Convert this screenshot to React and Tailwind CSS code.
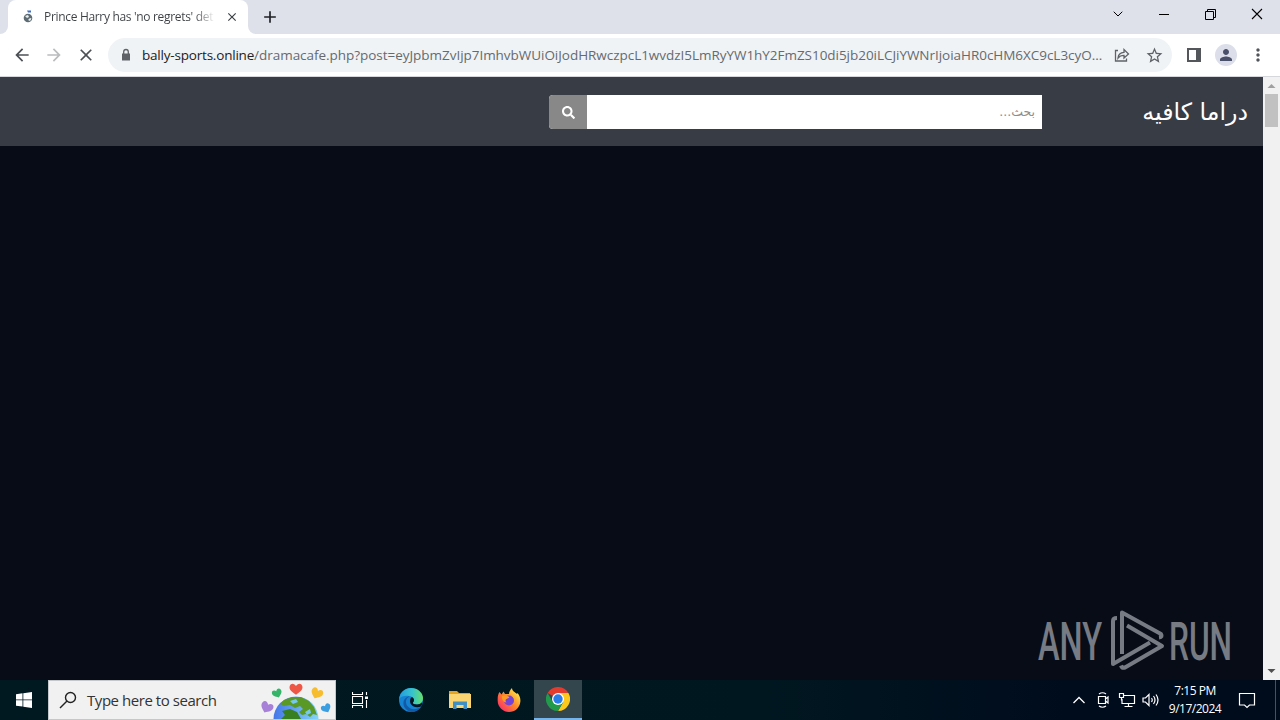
import { ChevronDown } from 'lucide-react';
import { FaSearch } from 'react-icons/fa';
import {
  MdArrowBack,
  MdArrowForward,
  MdClose,
  MdAdd,
  MdMoreVert,
  MdPerson,
  MdStarBorder,
} from 'react-icons/md';

/* Tab strip and window buttons */
function TabStrip() {
  return (
    <div className="flex h-[34px] shrink-0 bg-[#dee1e9] text-[#3c4043]">
      <div className="flex w-2 items-end bg-white">
        <span className="h-full w-2 rounded-br-lg bg-[#dee1e9]" />
      </div>
      <div className="flex w-[240px] items-center rounded-t-lg bg-white pl-3">
        <svg width="16" height="16" viewBox="0 0 16 16">
          <circle cx="8" cy="9" r="4.3" fill="#5f6b72" />
          <path d="M5 7l3-1 1 2-2 1zM8 11l2-2 1.500.5-1.500 2.500z" fill="#e8f0f2" />
          <path d="M7 1.500h4v2H8z" fill="#3d6ec4" />
        </svg>
        <div className="ml-2 w-[171px] bg-gradient-to-r from-[#3c4043] from-88% to-transparent bg-clip-text font-['Open_Sans',sans-serif] text-[12px] leading-5 tracking-[-0.32px] whitespace-nowrap text-transparent">
          Prince Harry has 'no regrets' det
        </div>
        <MdClose size={14} className="ml-2.5 text-[#3c4043]" />
      </div>
      <div className="flex w-2 bg-white">
        <span className="h-full w-2 rounded-bl-lg bg-[#dee1e9]" />
      </div>
      <MdAdd size={20} className="mt-[7px] ml-[4px] text-[#202124]" />
      <div className="ml-auto flex h-7 items-center text-black">
        <ChevronDown size={16} strokeWidth={1.5} className="mr-[33px]" />
        <span className="mr-9 h-px w-[10px] bg-black" />
        <svg width="11" height="11" viewBox="0 0 11 11" fill="none" stroke="currentColor" className="mr-[35px]">
          <path d="M.5 2.500h8v8h-8zM2.500 2.500v-2h8v8h-2" />
        </svg>
        <svg width="12" height="12" viewBox="0 0 12 12" fill="none" stroke="currentColor" strokeWidth="1.100" className="mr-[17px]">
          <path d="M1 1l10 10M11 1L1 11" />
        </svg>
      </div>
    </div>
  );
}

/* Navigation buttons and address bar */
function Toolbar() {
  return (
    <div className="flex h-[43px] shrink-0 items-center border-b border-[#d5d7dc] bg-white text-[#5f6368]">
      <MdArrowBack size={20} className="ml-3 text-[#4c5055]" />
      <MdArrowForward size={20} className="ml-3 text-[#babcbe]" />
      <MdClose size={20} className="ml-3 text-[#4c5055]" />
      <div className="ml-3 flex h-[34px] w-[1064px] items-center rounded-full bg-[#f0f3f5] pl-[11px]">
        <svg width="14" height="14" viewBox="0 0 14 14">
          <path d="M3 5.500h8v7H3z" fill="currentColor" />
          <path d="M4.700 6V3.800a2.300 2.300 0 0 1 4.600 0V6" fill="none" stroke="currentColor" strokeWidth="1.300" />
        </svg>
        <div className="ml-[9px] flex w-[961px] font-['Open_Sans',sans-serif] text-[13.500px] leading-5 whitespace-nowrap">
          <span className="tracking-[-0.2px] text-[#202124]">bally-sports.online</span>
          <span className="tracking-[-0.035px] text-[#656a6f]">
            /dramacafe.php?post=eyJpbmZvIjp7ImhvbWUiOiJodHRwczpcL1wvdzI5LmRyYW1hY2FmZS10di5jb20iLCJiYWNrIjoiaHR0cHM6XC9cL3cyO...
          </span>
        </div>
        <svg width="16" height="16" viewBox="0 0 16 16" fill="none" stroke="currentColor" strokeWidth="1.300" className="ml-[11px]">
          <path d="M4 3.500H1.500v10.500h11v-2.500M4 11c.3-3.600 2.400-5.400 6-5.600V2.500L14.500 7 10 11V8.300C7.300 8.300 5.500 9 4 11z" />
        </svg>
        <MdStarBorder size={19} className="ml-[15px]" />
      </div>
      <svg width="14" height="14" viewBox="0 0 14 14" className="ml-[15px]">
        <path d="M1 1h12v12H1z" fill="none" stroke="#53575b" strokeWidth="2" />
        <path d="M9 1h4v12H9z" fill="#53575b" />
      </svg>
      <span className="ml-[14px] flex size-[22px] items-center justify-center rounded-full bg-[#dcdfe9] text-[#4a4f6a]">
        <MdPerson size={18} />
      </span>
      <MdMoreVert size={20} className="ml-[11px] text-[#505459]" />
    </div>
  );
}

function PageHeader() {
  return (
    <header dir="rtl" className="flex h-[69px] shrink-0 bg-[#383c45]">
      <h1 className="mt-[13px] mr-[15px] w-[106px] font-['DejaVu_Sans',sans-serif] text-[23.700px] leading-[44px] whitespace-nowrap text-white">
        دراما كافيه
      </h1>
      <div className="mt-[18px] mr-[100px] flex h-[34px] w-[493px] overflow-hidden rounded-l-sm bg-white">
        <span className="flex-1 pr-[7px] font-['DejaVu_Sans',sans-serif] text-[12.500px] leading-[33px] text-[#8c8c8c]">بحث...</span>
        <button type="button" className="flex w-[38px] items-center justify-center bg-[#888] text-white">
          <FaSearch size={13} />
        </button>
      </div>
    </header>
  );
}

function Scrollbar() {
  return (
    <div className="flex w-[17px] flex-col items-center bg-[#f1f1f1]">
      <svg width="17" height="17" viewBox="0 0 17 17">
        <path d="M4.500 11h8l-4-4z" fill="#a0a0a0" />
      </svg>
      <span className="h-[33px] w-[13px] bg-[#c1c1c1]" />
      <svg width="17" height="17" viewBox="0 0 17 17" className="mt-auto">
        <path d="M4.500 6h8l-4 4z" fill="#505050" />
      </svg>
    </div>
  );
}

function Watermark() {
  return (
    <svg width="204" height="72" viewBox="0 0 204 72" className="mt-auto mr-[25px] ml-auto mb-1 text-[#777b83]">
      <g fill="currentColor" fontFamily="Roboto, sans-serif" fontSize="53" fontWeight="500">
        <text x="4" y="56" textLength="64" lengthAdjust="spacingAndGlyphs">ANY</text>
        <text x="135" y="56" textLength="63" lengthAdjust="spacingAndGlyphs">RUN</text>
      </g>
      <g transform="translate(66 0)" fill="none" stroke="currentColor" strokeWidth="4" strokeLinejoin="round">
        <path d="M17 14q-4 0-4 3v43l37-21.500" />
        <path d="M22 50V8.500l39 21.500q2 3-2 3.500" />
        <path d="M27 21.500l35 20.500-37 21.500q-3 1-4-2" />
      </g>
    </svg>
  );
}

/* Globe with hearts inside the taskbar search box */
function GlobeHearts() {
  const heart = 'M0 5C-3 3-6 1-5-2-4-5-1-4 0-2 1-4 4-5 5-2 6 1 3 3 0 5z';
  return (
    <svg width="74" height="38" viewBox="0 0 74 38">
      <defs>
        <linearGradient id="sea" x1="0" x2="1">
          <stop offset="0" stopColor="#4676e8" />
          <stop offset="1" stopColor="#83d5fb" />
        </linearGradient>
      </defs>
      <circle cx="36" cy="38" r="22.500" fill="url(#sea)" />
      <path d="M24 19l8-3 9 0 8 4 5 6 3 8-4-1-3 3-4-3-4 1-3-3 4-3-3-3-5 2-5-3-6 1-4-2z" fill="#5b9926" />
      <path d="M22 30l8-2 7 3 4 7H21l4-4z" fill="#377f20" />
      <path d="M30 20l6-2 2 3-5 2zM45 31l5-3 1 4-4 2z" fill="#76c9ed" />
      <path d={heart} transform="translate(36 7.500) scale(1.250)" fill="#ee5745" />
      <path d={heart} transform="translate(17 12) rotate(-22) scale(.95)" fill="#35b568" />
      <path d={heart} transform="translate(57 12) rotate(25) scale(1.150)" fill="#f7bd2e" />
      <path d={heart} transform="translate(7 26) rotate(25) scale(1.200)" fill="#a781d7" />
      <path d={heart} transform="translate(66 27) rotate(-28) scale(.95)" fill="#3b9ee1" />
    </svg>
  );
}

function EdgeIcon() {
  return (
    <svg width="24" height="24" viewBox="0 0 24 24">
      <defs>
        <linearGradient id="edge-top" x1="0" x2="1">
          <stop offset="0" stopColor="#239bdd" />
          <stop offset=".55" stopColor="#37c3cd" />
          <stop offset="1" stopColor="#68df68" />
        </linearGradient>
      </defs>
      <circle cx="12" cy="12" r="12" fill="#1683d2" />
      <path d="M.1 11C1 4 6 0 12 0c7 0 12 5 12 10 0 4-3 6.500-6 6.500-3 0-4.500-1-4-2 2-2 1-6-4-6.500C6 7.500 2 8 .1 11z" fill="url(#edge-top)" />
      <path d="M10.500 8.500C7 10 6 14 8 17.500c3 4.500 9 5 14.500 1C20 22.500 16 24 12 24 6 22 4 18 4.500 14c.4-3 3-5.500 6-5.500z" fill="#135aa6" />
      <path d="M13 9c2.500 1.500 2.500 4 1 5.500-.5 1 1 2 4 2 2 0 4-.8 5-2l.4.500c-.4 1.700-.7 2.500-1.400 3.500-4 1.500-9 .5-10.500-3C10.500 13 11 10 13 9z" fill="#001620" />
    </svg>
  );
}

function ExplorerIcon() {
  return (
    <svg width="22" height="18" viewBox="0 0 22 18">
      <path d="M0 0h8l2 2h11v3H0z" fill="#e5a322" />
      <path d="M0 3h22v14H0z" fill="#fbd572" />
      <path d="M4 10.500h14V18h-3.500v-4h-7v4H4z" fill="#3f8fc4" />
    </svg>
  );
}

function FirefoxIcon() {
  return (
    <svg width="24" height="24" viewBox="0 0 24 24">
      <defs>
        <linearGradient id="fox" x1="1" y1="0" x2="0" y2="1">
          <stop offset=".15" stopColor="#ffe14b" />
          <stop offset=".5" stopColor="#ff8429" />
          <stop offset=".9" stopColor="#f92f6b" />
        </linearGradient>
      </defs>
      <path d="M2.500 4l2 2.500L6.500 3.500 8 6l4 0c0-2.500 1.500-4.500 3-6 0 3 3 4 5 6l.5-1C23 8 23.700 11 23.300 14 22.500 20 18 24 12 24S.7 19 .7 13C.5 9 1 6 2.500 4z" fill="url(#fox)" />
      <circle cx="12" cy="12.500" r="5" fill="#7643d7" />
      <path d="M5 8c3-1 6-.5 7.500 1.500L9.500 11c-1.500 1-1 2.500 0 3.500-3 0-5-3-4.500-6.500z" fill="#ff9a24" />
    </svg>
  );
}

function ChromeIcon() {
  return (
    <svg width="24" height="24" viewBox="0 0 24 24">
      <path d="M12 12L1.600 6A12 12 0 0 1 22.400 6z" fill="#e33b2e" />
      <path d="M12 6h10.400A12 12 0 0 1 12 24l5.200-9z" fill="#fcc91f" />
      <path d="M6.800 15L1.600 6A12 12 0 0 0 12 24l5.200-9z" fill="#229a4b" />
      <circle cx="12" cy="12" r="6" fill="#fff" />
      <circle cx="12" cy="12" r="4.700" fill="#2b7de9" />
    </svg>
  );
}

function Tray() {
  return (
    <div className="ml-auto flex h-full items-center text-white">
      <svg width="14" height="10" viewBox="0 0 14 10" fill="none" stroke="currentColor" strokeWidth="1.300">
        <path d="M1.500 8L7 2.500 12.500 8" />
      </svg>
      <svg width="14" height="18" viewBox="0 0 14 18" fill="none" stroke="currentColor" strokeWidth="1.200" className="ml-[11px]">
        <path d="M1.500 5.500h7v7h-7zM8.500 8l2.500-2v6l-2.500-2M2 3Q5.500 .5 9 3M2 15Q5.500 17.500 9 15" />
      </svg>
      <svg width="18" height="16" viewBox="0 0 18 16" fill="none" stroke="currentColor" strokeWidth="1.200" className="ml-[7px]">
        <path d="M6 3.500h10.500v8H4V7M10.500 11.500v3M6.500 14.500h8M1.500 1.500h4v4h-4zM3.500 5.500v3" />
      </svg>
      <svg width="18" height="16" viewBox="0 0 18 16" fill="none" stroke="currentColor" strokeWidth="1.200" className="ml-1.5">
        <path d="M1 6h2.500L7 2.500v11L3.500 10H1zM9.500 6q1.500 2 0 4M11.500 4q3 4 0 8M14 2.500q4 5.500 0 11" />
      </svg>
      <div className="ml-[7px] w-[56px] text-center font-['Open_Sans',sans-serif] text-[12px] leading-[18px] tracking-[-0.5px] whitespace-nowrap">
        <p>7:15 PM</p>
        <p>9/17/2024</p>
      </div>
      <svg width="18" height="18" viewBox="0 0 18 18" fill="none" stroke="currentColor" strokeWidth="1.200" className="ml-[15px]">
        <path d="M1.500 2.500h15v11.500h-5L9 16.500 6.500 14h-5z" />
      </svg>
      <span className="ml-[19px] h-full w-px bg-[#48515d]" />
      <span className="w-1" />
    </div>
  );
}

function Taskbar() {
  return (
    <div className="flex h-10 shrink-0 items-center bg-gradient-to-r from-[#001820] via-[#001720] via-60% to-[#000b1c] to-85%">
      <svg width="16" height="16" viewBox="0 0 16 16" fill="#fff" className="mx-4">
        <path d="M0 2.200l6.500-.9v6.200H0zM7.300 1.200L16 0v7.500H7.300zM0 8.300h6.500v6.300L0 13.700zM7.300 8.300H16V16l-8.700-1.200z" />
      </svg>
      <div className="flex h-10 w-[288px] items-end border border-[#c4c8ca] bg-[#f1f1f1]">
        <svg width="18" height="18" viewBox="0 0 18 18" fill="none" stroke="#222" strokeWidth="1.400" className="mb-[10px] ml-[10px]">
          <circle cx="11.500" cy="6.500" r="5" />
          <path d="M8 10l-7 7" />
        </svg>
        <span className="mb-[7px] ml-[10px] w-[130px] font-['Open_Sans',sans-serif] text-[15px] leading-6 tracking-[-0.45px] whitespace-nowrap text-[#333]">
          Type here to search
        </span>
        <span className="ml-[43px]">
          <GlobeHearts />
        </span>
      </div>
      <svg width="17" height="16" viewBox="0 0 17 16" fill="none" stroke="#fff" strokeWidth="1.100" className="ml-4">
        <path d="M.5 4.500h10v7H.5zM.5 0v2.500h10V0M.5 16v-2.500h10V16M14.500 0v3M14.500 8v8" />
        <path d="M13 4.500h3v2.500h-3z" fill="#fff" stroke="none" />
      </svg>
      <span className="ml-[30px]"><EdgeIcon /></span>
      <span className="ml-[26px]"><ExplorerIcon /></span>
      <span className="ml-[26px]"><FirefoxIcon /></span>
      <span className="ml-[13px] flex h-full w-12 items-center justify-center border-b-2 border-[#76b5eb] bg-[#33454d]">
        <ChromeIcon />
      </span>
      <Tray />
    </div>
  );
}

export default function App() {
  return (
    <div className="flex h-[720px] w-[1280px] flex-col overflow-hidden bg-[#080c17]">
      <TabStrip />
      <Toolbar />
      <div className="flex min-h-0 flex-1">
        <main className="flex w-[1263px] flex-col">
          <PageHeader />
          <Watermark />
        </main>
        <Scrollbar />
      </div>
      <Taskbar />
    </div>
  );
}
